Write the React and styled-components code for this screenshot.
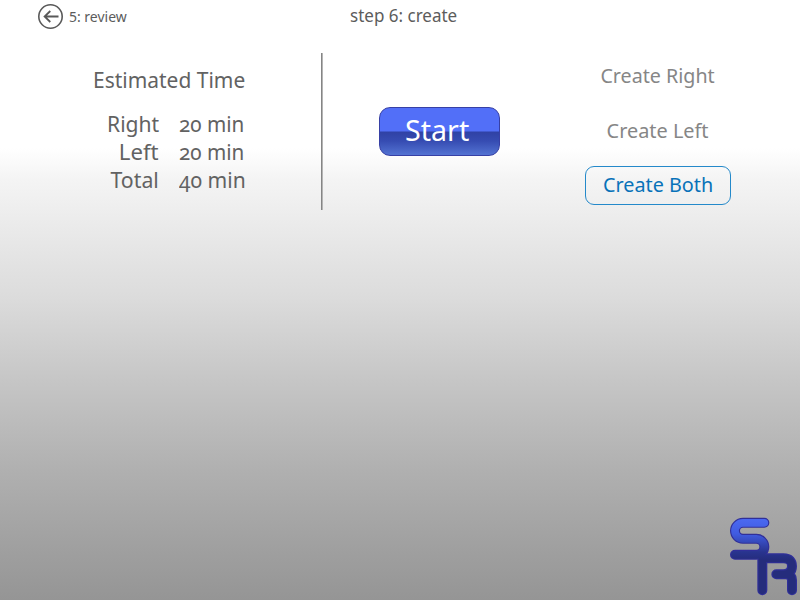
import React from "react";
import styled, { createGlobalStyle } from "styled-components";

const GlobalStyle = createGlobalStyle`
  * { box-sizing: border-box; }
  body { margin: 0; overflow: hidden; }
`;

const Page = styled.div`
  position: relative;
  width: 800px;
  height: 600px;
  overflow: hidden;
  background: linear-gradient(to bottom, #fff 0, #fff 148px, #f4f4f4 180px, #dbdbdb 300px, #c6c6c6 380px, #b0b0b0 470px, #959595 600px);
  font-family: "Noto Sans", sans-serif;
  color: #626262;
`;

const Header = styled.header`
  display: grid;
  grid-template-columns: 350px 1fr;
  height: 33px;
`;

const BackButton = styled.button`
  display: flex;
  align-items: center;
  gap: 5px;
  padding: 0 0 0 37px;
  height: 33px;
  border: 0;
  background: none;
  font: 14.2px/33px "Noto Sans", sans-serif;
  color: #5c5c5c;
`;

const Label = styled.span`
  display: block;
  white-space: nowrap;
  transform: scaleX(${(p) => p.$stretch || 1});
  transform-origin: ${(p) => p.$origin || "left"} center;
`;

const Title = styled.h1`
  margin: 0;
  color: #5c5c5c;
  font-size: 18px;
  font-weight: 400;
  line-height: 30px;
`;

const Main = styled.main`
  display: grid;
  grid-template-columns: 321px 2px 1fr 230px;
  padding-top: 20px;
`;

const Estimate = styled.section`
  padding: 12px 0 0 93px;
`;

const Heading = styled.h2`
  margin: 0 0 15px;
  font-size: 21.5px;
  font-weight: 400;
  line-height: 30px;
`;

const Times = styled.dl`
  display: grid;
  grid-template-columns: 66px 80px;
  column-gap: 20px;
  margin: 0;
  font-size: 21.5px;
  line-height: 28px;
  dt { justify-self: end; }
  dd { margin: 0; justify-self: start; font-variant-numeric: oldstyle-nums; }
`;

const Divider = styled.div`
  width: 2px;
  height: 157px;
  background: linear-gradient(to right, #858585 50%, #b4b4b4 50%);
`;

const Action = styled.section`
  padding: 54px 0 0 56px;
`;

const StartButton = styled.button`
  display: flex;
  justify-content: center;
  width: 121px;
  height: 49px;
  padding: 0 4px 0 0;
  border: 1px solid #3740a5;
  border-radius: 11px;
  background: linear-gradient(to bottom, #526ff8 0, #526ff8 23px, #3042a5 24px, #364cb2 33px, #5373d2 100%);
  color: #fff;
  font: 29.5px/44px "Noto Sans", sans-serif;
`;

const Options = styled.section`
  display: flex;
  flex-direction: column;
  align-items: flex-start;
  gap: 16px;
  padding: 4px 0 0 15px;
`;

const Option = styled.button`
  display: flex;
  justify-content: center;
  width: 146px;
  height: 38.5px;
  padding: 0;
  border: 1px solid ${(p) => (p.$selected ? "#2489ca" : "transparent")};
  border-radius: 9px;
  background: none;
  color: ${(p) => (p.$selected ? "#0872b9" : "#868686")};
  font: 20.5px/34px "Noto Sans", sans-serif;
`;

const Logo = styled.svg`
  position: absolute;
  right: 0;
  bottom: 0;
`;

const letterS = "M133 38.5H69A24 24 0 0 0 69 86.5H109A24 24 0 0 1 109 134.5H45";
const letterR = "M127 241V145H190C209 145 216 155 216 169C216 185 206 193 190 193H169M200 193Q216 196 216 210V241";

const times = [
  { name: "Right", value: "20 min", nameStretch: 0.98, valueStretch: 0.96 },
  { name: "Left", value: "20 min", nameStretch: 1.03, valueStretch: 0.96 },
  { name: "Total", value: "40 min", nameStretch: 0.99, valueStretch: 0.98 },
];

export default function App() {
  return (
    <Page>
      <GlobalStyle />
      <Header>
        <BackButton>
          <svg width="27" height="27" viewBox="0 0 27 27" fill="none" stroke="#595959">
            <circle cx="13.5" cy="13.5" r="11.7" strokeWidth="1.6" />
            <path d="M21.5 13.5H7.5M13.3 8L7.6 13.5L13.3 19" strokeWidth="1.8" />
          </svg>
          <Label $stretch={0.985}>5: review</Label>
        </BackButton>
        <Title><Label $stretch={0.945}>step 6: create</Label></Title>
      </Header>
      <Main>
        <Estimate>
          <Heading><Label $stretch={0.975}>Estimated Time</Label></Heading>
          <Times>
            {times.map((t) => (
              <React.Fragment key={t.name}>
                <dt><Label $origin="right" $stretch={t.nameStretch}>{t.name}</Label></dt>
                <dd><Label $stretch={t.valueStretch}>{t.value}</Label></dd>
              </React.Fragment>
            ))}
          </Times>
        </Estimate>
        <Divider />
        <Action>
          <StartButton><Label $origin="center" $stretch={0.97}>Start</Label></StartButton>
        </Action>
        <Options>
          <Option><Label $origin="center" $stretch={0.96}>Create Right</Label></Option>
          <Option><Label $origin="center" $stretch={0.97}>Create Left</Label></Option>
          <Option $selected><Label $origin="center" $stretch={0.965}>Create Both</Label></Option>
        </Options>
      </Main>
      <Logo width="80" height="90" viewBox="0 0 240 270" fill="none" strokeLinecap="round" strokeLinejoin="round">
        <defs>
          <linearGradient id="sr" gradientUnits="userSpaceOnUse" x1="0" y1="30" x2="0" y2="150">
            <stop offset="0" stopColor="#4a68f0" />
            <stop offset="0.35" stopColor="#405be0" />
            <stop offset="0.8" stopColor="#29348f" />
            <stop offset="1" stopColor="#252c7c" />
          </linearGradient>
        </defs>
        <g stroke="#302f99" strokeWidth="30"><path d={letterS} /><path d={letterR} /></g>
        <g stroke="url(#sr)" strokeWidth="23"><path d={letterS} /><path d={letterR} /></g>
      </Logo>
    </Page>
  );
}
